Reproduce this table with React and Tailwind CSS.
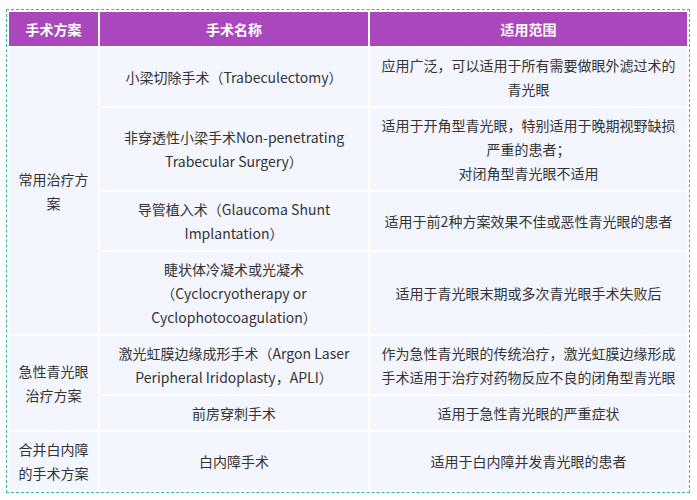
export default function App() {
  const rows = [
    {
      group: "常用治疗方案",
      span: 4,
      name: "小梁切除手术（Trabeculectomy）",
      scope: "应用广泛，可以适用于所有需要做眼外滤过术的青光眼",
    },
    {
      name: "非穿透性小梁手术Non-penetrating Trabecular Surgery）",
      scope: (
        <>
          适用于开角型青光眼，特别适用于晚期视野缺损严重的患者；
          <br />
          对闭角型青光眼不适用
        </>
      ),
    },
    {
      name: "导管植入术（Glaucoma Shunt Implantation）",
      scope: "适用于前2种方案效果不佳或恶性青光眼的患者",
    },
    {
      name: (
        <>
          睫状体冷凝术或光凝术
          <br />
          （Cyclocryotherapy or Cyclophotocoagulation）
        </>
      ),
      scope: "适用于青光眼末期或多次青光眼手术失败后",
    },
    {
      group: "急性青光眼治疗方案",
      span: 2,
      name: "激光虹膜边缘成形手术（Argon Laser Peripheral Iridoplasty，APLI）",
      scope: "作为急性青光眼的传统治疗，激光虹膜边缘形成手术适用于治疗对药物反应不良的闭角型青光眼",
    },
    {
      name: "前房穿刺手术",
      scope: "适用于急性青光眼的严重症状",
    },
    {
      group: "合并白内障的手术方案",
      span: 1,
      name: "白内障手术",
      scope: "适用于白内障并发青光眼的患者",
    },
  ];

  return (
    <div className="bg-white w-[697px] h-[500px] pt-[9px] pl-[6px]" style={{ fontFamily: '"Noto Sans CJK SC", "Noto Sans", sans-serif' }}>
      <div className="w-[684px] border border-dashed border-[#3bb4b4] pt-px">
        <table className="border-separate border-spacing-[2px] w-[682px] -mt-px table-fixed text-[14px] leading-[24px] text-[#333]">
          <colgroup>
            <col className="w-[89px]" />
            <col className="w-[268px]" />
            <col className="w-[317px]" />
          </colgroup>
          <thead>
            <tr>
              <th className="bg-[#ab47bc] text-white font-bold py-[5px]">手术方案</th>
              <th className="bg-[#ab47bc] text-white font-bold py-[5px]">手术名称</th>
              <th className="bg-[#ab47bc] text-white font-bold py-[5px]">适用范围</th>
            </tr>
          </thead>
          <tbody>
            {rows.map((r, i) => (
              <tr key={i}>
                {r.group && (
                  <td rowSpan={r.span} className="bg-[#f3f6fe] text-center align-middle px-[9px] py-[5px]">
                    {r.group}
                  </td>
                )}
                <td className="bg-[#f3f6fe] text-center align-middle px-[10px] py-[5px]">{r.name}</td>
                <td className="bg-[#f3f6fe] text-center align-middle px-[10px] py-[5px]">{r.scope}</td>
              </tr>
            ))}
          </tbody>
        </table>
      </div>
    </div>
  );
}
